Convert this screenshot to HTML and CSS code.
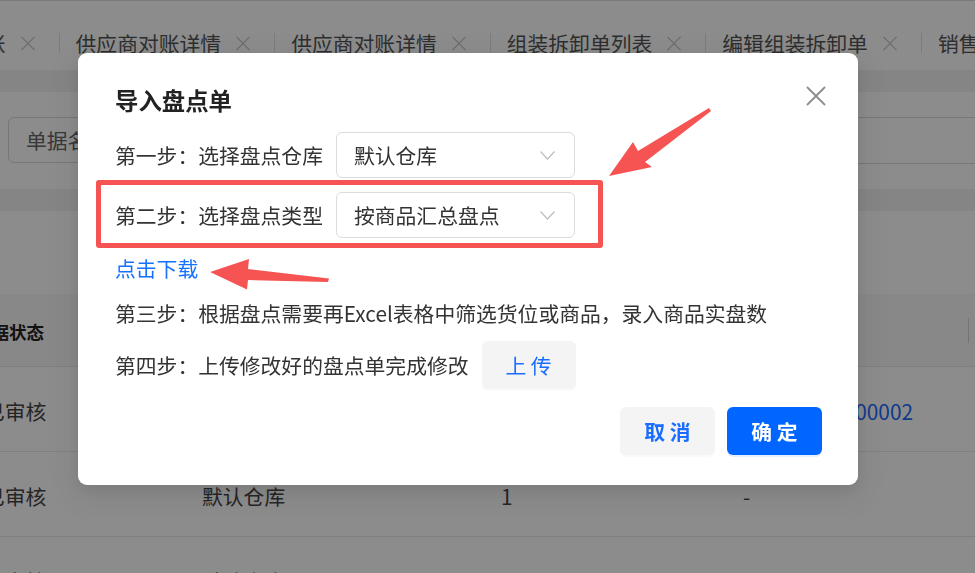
FILE: index.html
```html
<!DOCTYPE html>
<html lang="zh-CN">
<head>
<meta charset="utf-8">
<title>导入盘点单</title>
<link rel="stylesheet" href="styles.css">
</head>
<body>
<div class="page">
  <div class="tabbar">
    <div class="tabs">
      <div class="tab"><span class="tab-text">供应商往来对账</span><svg class="tab-x" viewBox="0 0 16 16"><path d="M1 1L15 15M15 1L1 15"/></svg></div>
      <div class="tab"><span class="tab-text">供应商对账详情</span><svg class="tab-x" viewBox="0 0 16 16"><path d="M1 1L15 15M15 1L1 15"/></svg></div>
      <div class="tab"><span class="tab-text">供应商对账详情</span><svg class="tab-x" viewBox="0 0 16 16"><path d="M1 1L15 15M15 1L1 15"/></svg></div>
      <div class="tab"><span class="tab-text">组装拆卸单列表</span><svg class="tab-x" viewBox="0 0 16 16"><path d="M1 1L15 15M15 1L1 15"/></svg></div>
      <div class="tab"><span class="tab-text">编辑组装拆卸单</span><svg class="tab-x" viewBox="0 0 16 16"><path d="M1 1L15 15M15 1L1 15"/></svg></div>
      <div class="tab"><span class="tab-text">销售出库单</span><svg class="tab-x" viewBox="0 0 16 16"><path d="M1 1L15 15M15 1L1 15"/></svg></div>
    </div>
  </div>
  <div class="gap"></div>
  <div class="filter">
    <div class="filter-input">单据名称</div>
    <div class="filter-right"></div>
  </div>
  <div class="gap"></div>
  <div class="table-card">
    <div class="thead">
      <div class="c1"><span class="th">单据状态</span></div>
      <div class="th-divider"></div>
    </div>
    <div class="trow">
      <div class="c1"><span>已审核</span></div>
      <div class="c2">默认仓库</div>
      <div class="c3">1</div>
      <div class="c4">-</div>
      <div class="c5"><span class="link-num">PD2023080100002</span></div>
    </div>
    <div class="trow">
      <div class="c1"><span>已审核</span></div>
      <div class="c2">默认仓库</div>
      <div class="c3">1</div>
      <div class="c4">-</div>
      <div class="c5"></div>
    </div>
    <div class="trow">
      <div class="c1"><span>已审核</span></div>
      <div class="c2">默认仓库</div>
      <div class="c3">1</div>
      <div class="c4">-</div>
      <div class="c5"></div>
    </div>
  </div>
</div>

<div class="mask"></div>

<div class="modal">
  <div class="modal-title">导入盘点单</div>
  <button class="modal-close" type="button"><svg viewBox="0 0 20 20"><path d="M1 1L19 19M19 1L1 19"/></svg></button>
  <div class="step-row">
    <span class="step-label">第一步：选择盘点仓库</span>
    <div class="select"><span>默认仓库</span><svg class="chev" viewBox="0 0 15 9"><path d="M0.5 0.5L7.5 8L14.5 0.5"/></svg></div>
  </div>
  <div class="step-row step-2">
    <span class="step-label">第二步：选择盘点类型</span>
    <div class="select"><span>按商品汇总盘点</span><svg class="chev" viewBox="0 0 15 9"><path d="M0.5 0.5L7.5 8L14.5 0.5"/></svg></div>
  </div>
  <a class="download">点击下载</a>
  <div class="step-text">第三步：根据盘点需要再Excel表格中筛选货位或商品，录入商品实盘数</div>
  <div class="step-row step-4">
    <span class="step-label">第四步：上传修改好的盘点单完成修改</span>
    <button class="btn btn-light btn-upload" type="button">上 传</button>
  </div>
  <div class="modal-footer">
    <button class="btn btn-light btn-strong" type="button">取 消</button>
    <button class="btn btn-primary btn-strong" type="button">确 定</button>
  </div>
  <div class="highlight"></div>
</div>

<svg class="annot" viewBox="0 0 975 573">
  <polygon points="210,272 249,259 248,269 329,278.5 328,282 248,280 247,289.5"/>
  <polygon points="609,176 633,142 638,151 709,108 711,111 645,162 652,167"/>
</svg>
</body>
</html>
```

FILE: styles.css
```css
* { box-sizing: border-box; }

html, body {
  margin: 0;
  padding: 0;
}

body {
  width: 975px;
  height: 573px;
  overflow: hidden;
  position: relative;
  background: #fff;
  color: #333;
  font-family: "Noto Sans CJK SC", "Noto Sans", sans-serif;
  font-size: 20.8px;
}

/* ---------- background page ---------- */
.page {
  width: 975px;
  height: 573px;
  overflow: hidden;
}

.tabbar {
  height: 70px;
  padding-top: 15px;
  border-top: 1px solid #dcdcdc;
  background: #fff;
  overflow: hidden;
}

.tabs {
  display: flex;
  align-items: center;
  height: 54px;
  margin-left: -157px;
  white-space: nowrap;
}

.tab {
  flex: none;
  display: flex;
  align-items: center;
  height: 20px;
  line-height: 20px;
  padding: 0 23px 0 16px;
  border-left: 1px solid #e2e2e2;
}

.tab-text {
  color: #555;
}

.tab-x {
  width: 16px;
  height: 15px;
  margin-left: 14px;
  fill: none;
  stroke: #c4c4c4;
  stroke-width: 1.3;
}

.gap {
  height: 22px;
  background: #f2f2f3;
}

.gap:first-of-type {
  height: 23px;
}

.filter {
  height: 97px;
  display: flex;
  align-items: flex-start;
  padding: 25px 0 0 8px;
  background: #fff;
}

.filter-input {
  width: 300px;
  height: 46px;
  display: flex;
  align-items: center;
  padding-left: 17px;
  border: 1px solid #d9d9d9;
  border-radius: 6px;
  color: #666;
}

.filter-right {
  margin-left: auto;
  margin-right: -40px;
  width: 280px;
  height: 47px;
  border: 1px solid #d9d9d9;
  border-radius: 6px;
}

.table-card {
  background: #fff;
  padding-top: 83px;
}

.thead {
  height: 73px;
  display: flex;
  align-items: center;
  background: #f8f8f9;
  border-bottom: 1px solid #e8e8e8;
}

.c1 .th {
  display: inline-block;
  font-size: 17.5px;
  font-weight: 700;
  color: #222;
  margin-left: -26px;
  margin-top: -3px;
}

.th-divider {
  margin-left: auto;
  margin-right: 6px;
  width: 1px;
  height: 25px;
  background: #d4d4d4;
}

.trow {
  height: 85px;
  display: flex;
  align-items: center;
  padding-top: 4px;
  border-bottom: 1px solid #e8e8e8;
  color: #444;
  white-space: nowrap;
}

.c1 { width: 202px; flex: none; }
.c1 span { display: inline-block; margin-left: -16px; }
.c2 { width: 299px; flex: none; }
.c3 { width: 242px; flex: none; }
.c4 { width: 114px; flex: none; }
.c5 {
  width: 56px;
  flex: none;
  display: flex;
  justify-content: flex-end;
}

.link-num {
  color: #1a6bff;
  flex: none;
}

/* ---------- overlay ---------- */
.mask {
  position: fixed;
  inset: 0;
  background: rgba(0, 0, 0, 0.45);
}

/* ---------- modal ---------- */
.modal {
  position: absolute;
  left: 78px;
  top: 53px;
  width: 780px;
  padding: 32px 36px 30px 37px;
  background: #fff;
  border-radius: 9px;
  box-shadow: 0 6px 16px rgba(0, 0, 0, 0.08), 0 9px 28px 8px rgba(0, 0, 0, 0.05);
}

.modal-title {
  font-size: 23.4px;
  line-height: 30px;
  font-weight: 700;
  color: #222;
}

.modal-close {
  position: absolute;
  top: 33px;
  right: 32px;
  width: 20px;
  height: 20px;
  padding: 0;
  border: 0;
  background: none;
}

.modal-close svg {
  display: block;
  width: 20px;
  height: 20px;
  fill: none;
  stroke: #8c8c8c;
  stroke-width: 1.8;
}

.step-row {
  display: flex;
  align-items: center;
  margin-top: 17px;
}

.step-2 {
  margin-top: 14px;
}

.step-4 {
  margin-top: 13px;
}

.step-label {
  margin-right: 13px;
  white-space: nowrap;
}

.select {
  width: 239px;
  height: 46px;
  display: flex;
  align-items: center;
  justify-content: space-between;
  padding: 0 19px 0 17px;
  border: 1px solid #dcdcdc;
  border-radius: 6px;
}

.chev {
  width: 15px;
  height: 9px;
  fill: none;
  stroke: #bdbdbd;
  stroke-width: 1.2;
}

.download {
  display: block;
  margin-top: 15px;
  line-height: 30px;
  color: #1671ff;
  cursor: pointer;
}

.step-text {
  margin-top: 15px;
  line-height: 30px;
  white-space: nowrap;
}

.btn {
  height: 48px;
  border: 0;
  border-radius: 6px;
  font-family: inherit;
  font-size: 20.8px;
  padding: 0;
  white-space: pre;
  box-shadow: 0 2px 0 rgba(0, 0, 0, 0.02);
}

.btn-light {
  background: #f4f4f5;
  color: #1a6dff;
}

.btn-upload {
  width: 94px;
}

.btn-strong {
  width: 95px;
  font-weight: 700;
}

.btn-primary {
  background: #0066ff;
  color: #fff;
  box-shadow: 0 2px 0 rgba(5, 102, 255, 0.1);
}

.modal-footer {
  display: flex;
  justify-content: flex-end;
  gap: 12px;
  margin-top: 18px;
}

.highlight {
  position: absolute;
  left: 18px;
  top: 127px;
  width: 507px;
  height: 68px;
  border: 5px solid #f65353;
  border-radius: 3px;
  pointer-events: none;
}

.annot {
  position: absolute;
  left: 0;
  top: 0;
  width: 975px;
  height: 573px;
  fill: #f65353;
  pointer-events: none;
}
```
